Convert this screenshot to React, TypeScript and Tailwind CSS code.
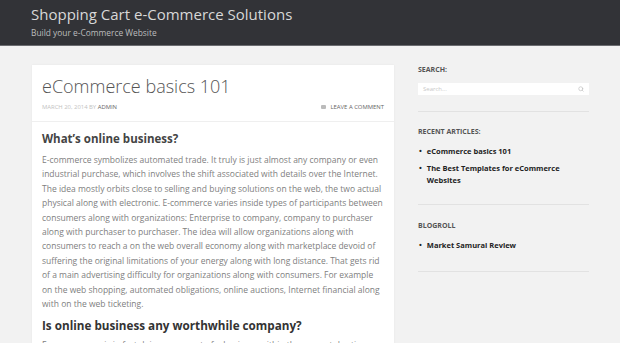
import { Search } from 'lucide-react';

const body = `E-commerce symbolizes automated trade. It truly is just almost any company or even industrial purchase, which involves the shift associated with details over the Internet. The idea mostly orbits close to selling and buying solutions on the web, the two actual physical along with electronic. E-commerce varies inside types of participants between consumers along with organizations: Enterprise to company, company to purchaser along with purchaser to purchaser. The idea will allow organizations along with consumers to reach a on the web overall economy along with marketplace devoid of suffering the original limitations of your energy along with long distance. That gets rid of a main advertising difficulty for organizations along with consumers. For example on the web shopping, automated obligations, online auctions, Internet financial along with on the web ticketing.`;

export default function App() {
  return (
    <div
      className="h-[343px] overflow-hidden bg-[#f2f2f2]"
      style={{ fontFamily: '"Open Sans", sans-serif' }}
    >
      <header className="h-[46px] border-b border-[#6b6c70] bg-[#323337] px-[31px] pt-[4px]">
        <h1 className="text-[15px] leading-[20px] text-[#d8d8d8]">Shopping Cart e-Commerce Solutions</h1>
        <p className="mt-[3px] text-[8.4px] leading-[12px] text-[#bdbdbd]">Build your e-Commerce Website</p>
      </header>

      <div className="flex gap-[24px] pl-[32px] pt-[19px]">
        <article className="w-[362px] shrink-0 bg-white shadow-[0_0_2px_rgba(0,0,0,0.06)]">
          <div className="border-b border-[#efefef] px-[10px] pb-[9px] pt-[9px]">
            <h2 className="text-[18px] font-light leading-[24px] text-[#555]">eCommerce basics 101</h2>
            <div className="mt-[4px] flex items-center justify-between text-[5.9px] uppercase leading-[10px]">
              <span className="text-[#c2c2c2]">
                March 20, 2014 by <span className="text-[#666]">Admin</span>
              </span>
              <span className="flex items-center gap-[5px] text-[#666]">
                <span className="inline-block h-[4px] w-[5px] rounded-[1px] bg-[#bbb]" />
                Leave a comment
              </span>
            </div>
          </div>
          <div className="pl-[10px] pr-[9px] pt-[9px]">
            <h3 className="text-[11.5px] font-bold leading-[16px] text-[#444]">What’s online business?</h3>
            <p className="mt-[6px] text-[8.5px] leading-[14.4px] text-[#808080]">{body}</p>
            <h3 className="mt-[5px] text-[11.7px] font-bold leading-[18px] text-[#333]">
              Is online business any worthwhile company?
            </h3>
            <p className="mt-[4px] text-[8.5px] leading-[14.4px] text-[#808080]">
              Every company is in fact doing some sort of e-business within the present day time.
            </p>
          </div>
        </article>

        <aside className="w-[171px]">
          <section className="border-b border-[#e2e2e2] pb-[16px]">
            <h3 className="text-[7px] font-bold uppercase leading-[10px] text-[#555]">Search:</h3>
            <div className="mt-[8px] flex h-[12px] items-center justify-between bg-white px-[5px]">
              <span className="text-[6px] text-[#c8c8c8]">Search...</span>
              <Search className="h-[6px] w-[6px] text-[#bbb]" strokeWidth={2.5} />
            </div>
          </section>
          <section className="border-b border-[#e2e2e2] pb-[18px] pt-[15px]">
            <h3 className="text-[7px] font-bold uppercase leading-[10px] text-[#555]">Recent Articles:</h3>
            <ul className="mt-[8px] space-y-[5px] text-[7.5px] font-bold leading-[12px] text-[#222]">
              <li className="flex gap-[5px] pl-[1px]"><span>•</span><span>eCommerce basics 101</span></li>
              <li className="flex gap-[5px] pl-[1px]"><span>•</span><span>The Best Templates for eCommerce Websites</span></li>
            </ul>
          </section>
          <section className="border-b border-[#e2e2e2] pb-[20px] pt-[16px]">
            <h3 className="text-[7px] font-bold uppercase leading-[10px] text-[#555]">Blogroll</h3>
            <ul className="mt-[8px] text-[7.5px] font-bold leading-[12px] text-[#222]">
              <li className="flex gap-[5px] pl-[1px]"><span>•</span><span>Market Samurai Review</span></li>
            </ul>
          </section>
        </aside>
      </div>
    </div>
  );
}
